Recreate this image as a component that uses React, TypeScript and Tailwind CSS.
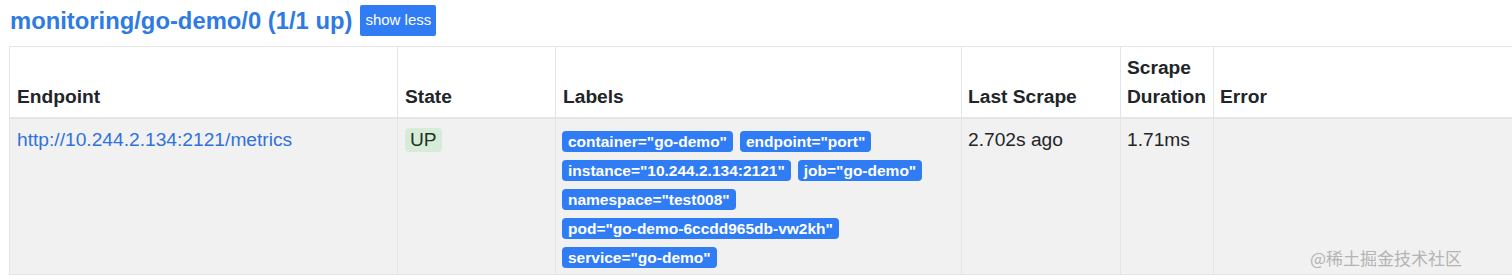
import React from 'react'

const labels = [
  'container="go-demo"',
  'endpoint="port"',
  'instance="10.244.2.134:2121"',
  'job="go-demo"',
  'namespace="test008"',
  'pod="go-demo-6ccdd965db-vw2kh"',
  'service="go-demo"',
]

const font = { fontFamily: '"Liberation Sans", Arial, sans-serif' }

export default function App() {
  return (
    <div className="relative w-[1512px] h-[280px] overflow-hidden bg-white text-[#212529]" style={font}>
      <div className="flex items-center gap-[8px] pl-[10px] pt-[5px] h-[36px]">
        <h2 className="text-[23.8px] font-bold leading-[31px] text-[#2f7be3]">monitoring/go-demo/0 (1/1 up)</h2>
        <button className="h-[31px] px-[5px] bg-[#2f7cf5] text-white text-[15px] rounded-[2px]">show less</button>
      </div>

      <table className="ml-[9px] mt-[10px] w-[1560px] border-collapse text-[19.2px] leading-[29px]">
        <thead>
          <tr className="bg-white">
            <th className="w-[388px] border border-[#e3e5e8] border-b-2 px-[7px] py-[6px] text-left align-bottom font-bold">Endpoint</th>
            <th className="w-[158px] border border-[#e3e5e8] border-b-2 px-[7px] py-[6px] text-left align-bottom font-bold">State</th>
            <th className="w-[406px] border border-[#e3e5e8] border-b-2 px-[7px] py-[6px] text-left align-bottom font-bold">Labels</th>
            <th className="w-[159px] border border-[#e3e5e8] border-b-2 px-[6px] py-[6px] text-left align-bottom font-bold">Last Scrape</th>
            <th className="w-[93px] border border-[#e3e5e8] border-b-2 px-[6px] py-[6px] text-left align-bottom font-bold">Scrape Duration</th>
            <th className="border border-[#e3e5e8] border-b-2 px-[6px] py-[6px] text-left align-bottom font-bold">Error</th>
          </tr>
        </thead>
        <tbody>
          <tr className="bg-[#f1f1f1]">
            <td className="border border-[#e3e5e8] px-[7px] py-[6px] align-top">
              <a className="text-[#2f72dc]">http://10.244.2.134:2121/metrics</a>
            </td>
            <td className="border border-[#e3e5e8] px-[7px] py-[6px] align-top">
              <span className="inline-flex items-center h-[24px] mt-[2px] px-[5px] rounded-[4px] bg-[#d6ecd9] text-[#1f3520] leading-[24px]">UP</span>
            </td>
            <td className="border border-[#e3e5e8] px-[6px] pt-[12px] pb-[6px] align-top">
              <div className="flex flex-wrap gap-x-[7px] gap-y-[8px]">
                {labels.map(l => (
                  <span
                    key={l}
                    className="h-[21px] px-[6px] rounded-[4px] bg-[#2f7cf5] text-white text-[15.5px] font-bold leading-[21px] whitespace-nowrap"
                  >
                    {l}
                  </span>
                ))}
              </div>
            </td>
            <td className="border border-[#e3e5e8] px-[6px] py-[6px] align-top">2.702s ago</td>
            <td className="border border-[#e3e5e8] px-[6px] py-[6px] align-top">1.71ms</td>
            <td className="border border-[#e3e5e8] px-[6px] py-[6px] align-top"></td>
          </tr>
        </tbody>
      </table>

      <div
        className="absolute right-[50px] top-[245px] text-[17px] text-[#b4b4b4]"
        style={{ fontFamily: '"Noto Sans CJK SC", "Liberation Sans", sans-serif' }}
      >
        @稀土掘金技术社区
      </div>
    </div>
  )
}
